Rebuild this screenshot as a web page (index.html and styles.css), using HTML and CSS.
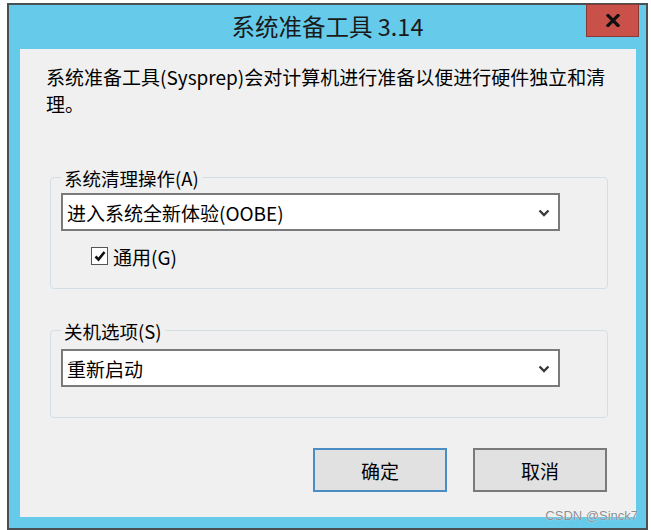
FILE: index.html
```html
<!DOCTYPE html>
<html lang="zh-CN">
<head>
<meta charset="utf-8">
<title>系统准备工具 3.14</title>
<link rel="stylesheet" href="styles.css">
</head>
<body>
<div class="window">
  <div class="titlebar">
    <span class="spacer"></span>
    <span class="title">系统准备工具 3.14</span>
    <button class="close" aria-label="关闭">
      <svg width="14" height="13" viewBox="0 0 14 13"><path d="M2 1.5 L12 11.5 M12 1.5 L2 11.5" stroke="#111" stroke-width="3.2" stroke-linecap="square"/></svg>
    </button>
  </div>
  <div class="panel">
    <p class="desc">系统准备工具(Sysprep)会对计算机进行准备以便进行硬件独立和清理。</p>

    <div class="group g1">
      <div class="legend">系统清理操作(A)</div>
      <div class="select s1">
        <span>进入系统全新体验(OOBE)</span>
        <svg class="chev" width="12" height="8" viewBox="0 0 12 8"><path d="M1.5 1.5 L6 6 L10.5 1.5" fill="none" stroke="#3a3a3a" stroke-width="2.4"/></svg>
      </div>
      <label class="check">
        <span class="box"><svg width="14" height="14" viewBox="0 0 14 14"><path d="M2.5 7.5 L5.5 10.5 L11.5 3" fill="none" stroke="#111" stroke-width="2.6"/></svg></span>
        <span>通用(G)</span>
      </label>
    </div>

    <div class="group g2">
      <div class="legend">关机选项(S)</div>
      <div class="select s2">
        <span>重新启动</span>
        <svg class="chev" width="12" height="8" viewBox="0 0 12 8"><path d="M1.5 1.5 L6 6 L10.5 1.5" fill="none" stroke="#3a3a3a" stroke-width="2.4"/></svg>
      </div>
    </div>

    <div class="buttons">
      <button class="btn primary">确定</button>
      <button class="btn">取消</button>
    </div>
  </div>
  <div class="watermark">CSDN @Sinck7</div>
</div>
</body>
</html>
```

FILE: styles.css
```css
html, body {
  margin: 0;
  padding: 0;
  background: #ffffff;
}
body {
  font-family: "Noto Sans CJK SC", "Noto Sans", sans-serif;
  color: #000;
}
.window {
  position: relative;
  box-sizing: border-box;
  margin: 3px 0 0 7px;
  width: 641px;
  height: 527px;
  border: 2px solid #4a4f52;
  background: #66cbea;
}
.titlebar {
  display: grid;
  grid-template-columns: 1fr auto 1fr;
  height: 44px;
}
.title {
  align-self: start;
  font-size: 23.5px;
  line-height: 30px;
  margin-top: 6px;
  color: #1a1a1a;
}
.close {
  justify-self: end;
  align-self: start;
  margin: -1px 7px 0 0;
  width: 53px;
  height: 33px;
  background: #c9514a;
  border: 1px solid #8a3a35;
  display: flex;
  align-items: center;
  justify-content: center;
  padding: 0;
}
.panel {
  box-sizing: border-box;
  margin: 0 10px 0 11px;
  height: 468px;
  background: #f0f0f0;
  padding: 14px 29px 0 0;
  display: flex;
  flex-direction: column;
}
.desc {
  margin: 0 0 0 26px;
  width: 566px;
  font-size: 19px;
  line-height: 27px;
}
.group {
  box-sizing: border-box;
  margin-left: 30px;
  width: 558px;
  border: 1px solid #d3dee5;
  border-radius: 4px;
}
.g1 {
  margin-top: 60px;
  height: 112px;
}
.g2 {
  margin-top: 41px;
  height: 88px;
}
.legend {
  display: block;
  width: fit-content;
  background: #f0f0f0;
  margin: -12px 0 0 10px;
  padding: 0 3px;
  font-size: 18.5px;
  line-height: 24px;
}
.select {
  box-sizing: border-box;
  margin-left: 10px;
  width: 499px;
  height: 38px;
  border: 2px solid #7a7a7a;
  background: #fff;
  display: flex;
  align-items: center;
  justify-content: space-between;
  padding: 0 8px 0 4px;
  font-size: 19px;
}
.s1 { margin-top: 3px; }
.s2 { margin-top: 6px; }
.chev { margin-top: 1px; }
.check {
  display: flex;
  align-items: center;
  margin: 13px 0 0 40px;
  height: 24px;
  font-size: 19px;
}
.box {
  box-sizing: border-box;
  width: 17px;
  height: 18px;
  border: 1px solid #555;
  background: #fff;
  display: flex;
  align-items: center;
  justify-content: center;
  margin-right: 5px;
}
.buttons {
  display: flex;
  justify-content: flex-end;
  gap: 26px;
  margin-top: 30px;
}
.btn {
  box-sizing: border-box;
  width: 134px;
  height: 44px;
  background: #e1e1e1;
  border: 2px solid #7a7a7a;
  font-family: "Noto Sans CJK SC", sans-serif;
  font-size: 19px;
  color: #000;
  padding: 0;
}
.btn.primary {
  border-color: #4a8cc4;
}
.watermark {
  position: absolute;
  right: 8px;
  bottom: 5px;
  font-family: "Liberation Sans", sans-serif;
  font-size: 13px;
  color: #8a8f94;
  text-shadow: 0 0 1px #fff;
}
```
